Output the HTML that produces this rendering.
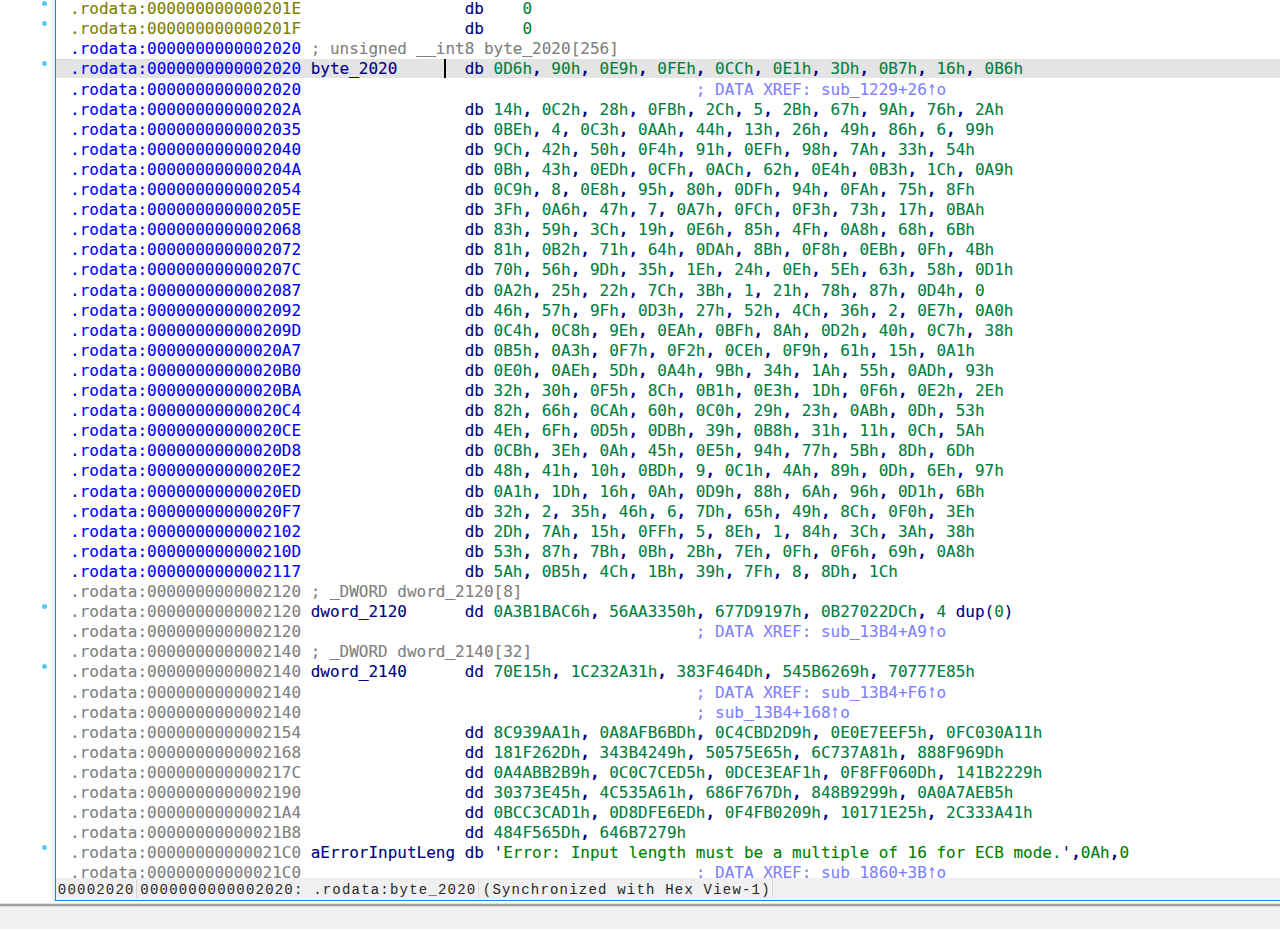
<!DOCTYPE html>
<html lang="en"><head><meta charset="utf-8"><title>IDA View</title>
<style>
html,body{margin:0;padding:0;background:#fff;}
body{width:1280px;height:930px;position:relative;overflow:hidden;}
#view{position:absolute;left:0;top:0;width:1280px;height:878px;overflow:hidden;background:#fff;}
.r{position:absolute;left:0;height:21px;line-height:21px;white-space:pre;font-family:"DejaVu Sans Mono", "Liberation Mono", monospace;font-size:15.0px;letter-spacing:0.0000px;font-kerning:none;font-variant-ligatures:none;-webkit-text-stroke:0.1px currentColor;}
.hl{position:absolute;left:56px;width:1224px;background:#e4e4e4;}
.dot{position:absolute;left:41.8px;width:5.4px;height:5.4px;border-radius:50%;background:#56c8fd;}
.o{color:#808000}.b{color:#0000ff}.g{color:#808080}.k{color:#000080}.n{color:#008040}.s{color:#008000}.x{color:#8080ff}
.c{font-weight:bold;}
.u{font-family:"Liberation Mono",monospace;letter-spacing:0.0293px;position:relative;top:1.2px;-webkit-text-stroke:0.5px currentColor;}
.a{display:inline-block;width:9.0308px;letter-spacing:0;text-align:center;transform:scale(.82,1.36);transform-origin:50% 76%;}
#txt{position:absolute;left:69.8px;top:0;width:1150px;height:900px;transform:scaleX(1.06602);transform-origin:0 0;}
#gut{position:absolute;left:51px;top:0;width:4px;height:902px;background:linear-gradient(90deg,#fff 0,#f3f3f3 40%,#e8e8e8 100%);}
#vline{position:absolute;left:55px;top:0;width:1px;height:901px;background:#2583e0;}
#hline{position:absolute;left:55px;top:900px;width:1225px;height:1px;background:#2583e0;}
#status{position:absolute;left:56px;top:878px;width:1224px;height:21px;background:#f0f0f0;font-family:"Liberation Mono","DejaVu Sans Mono",monospace;font-size:14px;letter-spacing:1.1986px;color:#262626;white-space:pre;line-height:21px;}
#status span{position:absolute;top:2.0px;}
#status i{position:absolute;top:1px;width:1px;height:19px;background:#d4d4d4;border-left:1px solid #fafafa;}
#sep{position:absolute;left:0;top:903px;width:1280px;height:4px;background:linear-gradient(#e3e3e3 0,#e3e3e3 25%,#a0a0a0 25%,#a0a0a0 75%,#dcdcdc 75%);}
#bot{position:absolute;left:0;top:907px;width:1280px;height:22px;background:#f0f0f0;}
#tick{position:absolute;left:56px;width:14px;height:1px;background:#d2d2d2;}
#cur{position:absolute;width:2.2px;background:#000;}
</style></head><body>
<div id="view">

<div class="dot" style="top:0.8px"></div>
<div class="dot" style="top:20.9px"></div>
<div class="hl" style="top:58.9px;height:19.6px"></div>
<div id="tick" style="top:58.6px"></div>
<div id="cur" style="left:444.2px;top:58.7px;height:19.7px"></div>
<div class="dot" style="top:61.1px"></div>
<div class="dot" style="top:603.8px"></div>
<div class="dot" style="top:664.1px"></div>
<div class="dot" style="top:845.0px"></div>
<div id="txt">
<div class="r" style="top:-0.9px"><span class="o">.rodata:000000000000201E</span>                 <span class="k">db</span>    <span class="n">0</span></div>
<div class="r" style="top:19.2px"><span class="o">.rodata:000000000000201F</span>                 <span class="k">db</span>    <span class="n">0</span></div>
<div class="r" style="top:39.2px"><span class="b">.rodata:0000000000002020</span> <span class="g">; unsigned <span class="u">__</span>int8 byte<span class="u">_</span>2020[256]</span></div>
<div class="r" style="top:59.4px"><span class="b">.rodata:0000000000002020</span> <span class="k">byte<span class="u">_</span>2020</span>       <span class="k">db</span> <span class="n">0D6h</span><span class="k c">, </span><span class="n">90h</span><span class="k c">, </span><span class="n">0E9h</span><span class="k c">, </span><span class="n">0FEh</span><span class="k c">, </span><span class="n">0CCh</span><span class="k c">, </span><span class="n">0E1h</span><span class="k c">, </span><span class="n">3Dh</span><span class="k c">, </span><span class="n">0B7h</span><span class="k c">, </span><span class="n">16h</span><span class="k c">, </span><span class="n">0B6h</span></div>
<div class="r" style="top:79.5px"><span class="b">.rodata:0000000000002020</span>                                         <span class="x">; DATA XREF: sub<span class="u">_</span>1229+26<span class="a">↑</span>o</span></div>
<div class="r" style="top:99.5px"><span class="b">.rodata:000000000000202A</span>                 <span class="k">db</span> <span class="n">14h</span><span class="k c">, </span><span class="n">0C2h</span><span class="k c">, </span><span class="n">28h</span><span class="k c">, </span><span class="n">0FBh</span><span class="k c">, </span><span class="n">2Ch</span><span class="k c">, </span><span class="n">5</span><span class="k c">, </span><span class="n">2Bh</span><span class="k c">, </span><span class="n">67h</span><span class="k c">, </span><span class="n">9Ah</span><span class="k c">, </span><span class="n">76h</span><span class="k c">, </span><span class="n">2Ah</span></div>
<div class="r" style="top:119.7px"><span class="b">.rodata:0000000000002035</span>                 <span class="k">db</span> <span class="n">0BEh</span><span class="k c">, </span><span class="n">4</span><span class="k c">, </span><span class="n">0C3h</span><span class="k c">, </span><span class="n">0AAh</span><span class="k c">, </span><span class="n">44h</span><span class="k c">, </span><span class="n">13h</span><span class="k c">, </span><span class="n">26h</span><span class="k c">, </span><span class="n">49h</span><span class="k c">, </span><span class="n">86h</span><span class="k c">, </span><span class="n">6</span><span class="k c">, </span><span class="n">99h</span></div>
<div class="r" style="top:139.8px"><span class="b">.rodata:0000000000002040</span>                 <span class="k">db</span> <span class="n">9Ch</span><span class="k c">, </span><span class="n">42h</span><span class="k c">, </span><span class="n">50h</span><span class="k c">, </span><span class="n">0F4h</span><span class="k c">, </span><span class="n">91h</span><span class="k c">, </span><span class="n">0EFh</span><span class="k c">, </span><span class="n">98h</span><span class="k c">, </span><span class="n">7Ah</span><span class="k c">, </span><span class="n">33h</span><span class="k c">, </span><span class="n">54h</span></div>
<div class="r" style="top:159.9px"><span class="b">.rodata:000000000000204A</span>                 <span class="k">db</span> <span class="n">0Bh</span><span class="k c">, </span><span class="n">43h</span><span class="k c">, </span><span class="n">0EDh</span><span class="k c">, </span><span class="n">0CFh</span><span class="k c">, </span><span class="n">0ACh</span><span class="k c">, </span><span class="n">62h</span><span class="k c">, </span><span class="n">0E4h</span><span class="k c">, </span><span class="n">0B3h</span><span class="k c">, </span><span class="n">1Ch</span><span class="k c">, </span><span class="n">0A9h</span></div>
<div class="r" style="top:180.0px"><span class="b">.rodata:0000000000002054</span>                 <span class="k">db</span> <span class="n">0C9h</span><span class="k c">, </span><span class="n">8</span><span class="k c">, </span><span class="n">0E8h</span><span class="k c">, </span><span class="n">95h</span><span class="k c">, </span><span class="n">80h</span><span class="k c">, </span><span class="n">0DFh</span><span class="k c">, </span><span class="n">94h</span><span class="k c">, </span><span class="n">0FAh</span><span class="k c">, </span><span class="n">75h</span><span class="k c">, </span><span class="n">8Fh</span></div>
<div class="r" style="top:200.1px"><span class="b">.rodata:000000000000205E</span>                 <span class="k">db</span> <span class="n">3Fh</span><span class="k c">, </span><span class="n">0A6h</span><span class="k c">, </span><span class="n">47h</span><span class="k c">, </span><span class="n">7</span><span class="k c">, </span><span class="n">0A7h</span><span class="k c">, </span><span class="n">0FCh</span><span class="k c">, </span><span class="n">0F3h</span><span class="k c">, </span><span class="n">73h</span><span class="k c">, </span><span class="n">17h</span><span class="k c">, </span><span class="n">0BAh</span></div>
<div class="r" style="top:220.2px"><span class="b">.rodata:0000000000002068</span>                 <span class="k">db</span> <span class="n">83h</span><span class="k c">, </span><span class="n">59h</span><span class="k c">, </span><span class="n">3Ch</span><span class="k c">, </span><span class="n">19h</span><span class="k c">, </span><span class="n">0E6h</span><span class="k c">, </span><span class="n">85h</span><span class="k c">, </span><span class="n">4Fh</span><span class="k c">, </span><span class="n">0A8h</span><span class="k c">, </span><span class="n">68h</span><span class="k c">, </span><span class="n">6Bh</span></div>
<div class="r" style="top:240.3px"><span class="b">.rodata:0000000000002072</span>                 <span class="k">db</span> <span class="n">81h</span><span class="k c">, </span><span class="n">0B2h</span><span class="k c">, </span><span class="n">71h</span><span class="k c">, </span><span class="n">64h</span><span class="k c">, </span><span class="n">0DAh</span><span class="k c">, </span><span class="n">8Bh</span><span class="k c">, </span><span class="n">0F8h</span><span class="k c">, </span><span class="n">0EBh</span><span class="k c">, </span><span class="n">0Fh</span><span class="k c">, </span><span class="n">4Bh</span></div>
<div class="r" style="top:260.4px"><span class="b">.rodata:000000000000207C</span>                 <span class="k">db</span> <span class="n">70h</span><span class="k c">, </span><span class="n">56h</span><span class="k c">, </span><span class="n">9Dh</span><span class="k c">, </span><span class="n">35h</span><span class="k c">, </span><span class="n">1Eh</span><span class="k c">, </span><span class="n">24h</span><span class="k c">, </span><span class="n">0Eh</span><span class="k c">, </span><span class="n">5Eh</span><span class="k c">, </span><span class="n">63h</span><span class="k c">, </span><span class="n">58h</span><span class="k c">, </span><span class="n">0D1h</span></div>
<div class="r" style="top:280.5px"><span class="b">.rodata:0000000000002087</span>                 <span class="k">db</span> <span class="n">0A2h</span><span class="k c">, </span><span class="n">25h</span><span class="k c">, </span><span class="n">22h</span><span class="k c">, </span><span class="n">7Ch</span><span class="k c">, </span><span class="n">3Bh</span><span class="k c">, </span><span class="n">1</span><span class="k c">, </span><span class="n">21h</span><span class="k c">, </span><span class="n">78h</span><span class="k c">, </span><span class="n">87h</span><span class="k c">, </span><span class="n">0D4h</span><span class="k c">, </span><span class="n">0</span></div>
<div class="r" style="top:300.6px"><span class="b">.rodata:0000000000002092</span>                 <span class="k">db</span> <span class="n">46h</span><span class="k c">, </span><span class="n">57h</span><span class="k c">, </span><span class="n">9Fh</span><span class="k c">, </span><span class="n">0D3h</span><span class="k c">, </span><span class="n">27h</span><span class="k c">, </span><span class="n">52h</span><span class="k c">, </span><span class="n">4Ch</span><span class="k c">, </span><span class="n">36h</span><span class="k c">, </span><span class="n">2</span><span class="k c">, </span><span class="n">0E7h</span><span class="k c">, </span><span class="n">0A0h</span></div>
<div class="r" style="top:320.7px"><span class="b">.rodata:000000000000209D</span>                 <span class="k">db</span> <span class="n">0C4h</span><span class="k c">, </span><span class="n">0C8h</span><span class="k c">, </span><span class="n">9Eh</span><span class="k c">, </span><span class="n">0EAh</span><span class="k c">, </span><span class="n">0BFh</span><span class="k c">, </span><span class="n">8Ah</span><span class="k c">, </span><span class="n">0D2h</span><span class="k c">, </span><span class="n">40h</span><span class="k c">, </span><span class="n">0C7h</span><span class="k c">, </span><span class="n">38h</span></div>
<div class="r" style="top:340.8px"><span class="b">.rodata:00000000000020A7</span>                 <span class="k">db</span> <span class="n">0B5h</span><span class="k c">, </span><span class="n">0A3h</span><span class="k c">, </span><span class="n">0F7h</span><span class="k c">, </span><span class="n">0F2h</span><span class="k c">, </span><span class="n">0CEh</span><span class="k c">, </span><span class="n">0F9h</span><span class="k c">, </span><span class="n">61h</span><span class="k c">, </span><span class="n">15h</span><span class="k c">, </span><span class="n">0A1h</span></div>
<div class="r" style="top:360.9px"><span class="b">.rodata:00000000000020B0</span>                 <span class="k">db</span> <span class="n">0E0h</span><span class="k c">, </span><span class="n">0AEh</span><span class="k c">, </span><span class="n">5Dh</span><span class="k c">, </span><span class="n">0A4h</span><span class="k c">, </span><span class="n">9Bh</span><span class="k c">, </span><span class="n">34h</span><span class="k c">, </span><span class="n">1Ah</span><span class="k c">, </span><span class="n">55h</span><span class="k c">, </span><span class="n">0ADh</span><span class="k c">, </span><span class="n">93h</span></div>
<div class="r" style="top:381.0px"><span class="b">.rodata:00000000000020BA</span>                 <span class="k">db</span> <span class="n">32h</span><span class="k c">, </span><span class="n">30h</span><span class="k c">, </span><span class="n">0F5h</span><span class="k c">, </span><span class="n">8Ch</span><span class="k c">, </span><span class="n">0B1h</span><span class="k c">, </span><span class="n">0E3h</span><span class="k c">, </span><span class="n">1Dh</span><span class="k c">, </span><span class="n">0F6h</span><span class="k c">, </span><span class="n">0E2h</span><span class="k c">, </span><span class="n">2Eh</span></div>
<div class="r" style="top:401.1px"><span class="b">.rodata:00000000000020C4</span>                 <span class="k">db</span> <span class="n">82h</span><span class="k c">, </span><span class="n">66h</span><span class="k c">, </span><span class="n">0CAh</span><span class="k c">, </span><span class="n">60h</span><span class="k c">, </span><span class="n">0C0h</span><span class="k c">, </span><span class="n">29h</span><span class="k c">, </span><span class="n">23h</span><span class="k c">, </span><span class="n">0ABh</span><span class="k c">, </span><span class="n">0Dh</span><span class="k c">, </span><span class="n">53h</span></div>
<div class="r" style="top:421.2px"><span class="b">.rodata:00000000000020CE</span>                 <span class="k">db</span> <span class="n">4Eh</span><span class="k c">, </span><span class="n">6Fh</span><span class="k c">, </span><span class="n">0D5h</span><span class="k c">, </span><span class="n">0DBh</span><span class="k c">, </span><span class="n">39h</span><span class="k c">, </span><span class="n">0B8h</span><span class="k c">, </span><span class="n">31h</span><span class="k c">, </span><span class="n">11h</span><span class="k c">, </span><span class="n">0Ch</span><span class="k c">, </span><span class="n">5Ah</span></div>
<div class="r" style="top:441.3px"><span class="b">.rodata:00000000000020D8</span>                 <span class="k">db</span> <span class="n">0CBh</span><span class="k c">, </span><span class="n">3Eh</span><span class="k c">, </span><span class="n">0Ah</span><span class="k c">, </span><span class="n">45h</span><span class="k c">, </span><span class="n">0E5h</span><span class="k c">, </span><span class="n">94h</span><span class="k c">, </span><span class="n">77h</span><span class="k c">, </span><span class="n">5Bh</span><span class="k c">, </span><span class="n">8Dh</span><span class="k c">, </span><span class="n">6Dh</span></div>
<div class="r" style="top:461.4px"><span class="b">.rodata:00000000000020E2</span>                 <span class="k">db</span> <span class="n">48h</span><span class="k c">, </span><span class="n">41h</span><span class="k c">, </span><span class="n">10h</span><span class="k c">, </span><span class="n">0BDh</span><span class="k c">, </span><span class="n">9</span><span class="k c">, </span><span class="n">0C1h</span><span class="k c">, </span><span class="n">4Ah</span><span class="k c">, </span><span class="n">89h</span><span class="k c">, </span><span class="n">0Dh</span><span class="k c">, </span><span class="n">6Eh</span><span class="k c">, </span><span class="n">97h</span></div>
<div class="r" style="top:481.5px"><span class="b">.rodata:00000000000020ED</span>                 <span class="k">db</span> <span class="n">0A1h</span><span class="k c">, </span><span class="n">1Dh</span><span class="k c">, </span><span class="n">16h</span><span class="k c">, </span><span class="n">0Ah</span><span class="k c">, </span><span class="n">0D9h</span><span class="k c">, </span><span class="n">88h</span><span class="k c">, </span><span class="n">6Ah</span><span class="k c">, </span><span class="n">96h</span><span class="k c">, </span><span class="n">0D1h</span><span class="k c">, </span><span class="n">6Bh</span></div>
<div class="r" style="top:501.6px"><span class="b">.rodata:00000000000020F7</span>                 <span class="k">db</span> <span class="n">32h</span><span class="k c">, </span><span class="n">2</span><span class="k c">, </span><span class="n">35h</span><span class="k c">, </span><span class="n">46h</span><span class="k c">, </span><span class="n">6</span><span class="k c">, </span><span class="n">7Dh</span><span class="k c">, </span><span class="n">65h</span><span class="k c">, </span><span class="n">49h</span><span class="k c">, </span><span class="n">8Ch</span><span class="k c">, </span><span class="n">0F0h</span><span class="k c">, </span><span class="n">3Eh</span></div>
<div class="r" style="top:521.6px"><span class="b">.rodata:0000000000002102</span>                 <span class="k">db</span> <span class="n">2Dh</span><span class="k c">, </span><span class="n">7Ah</span><span class="k c">, </span><span class="n">15h</span><span class="k c">, </span><span class="n">0FFh</span><span class="k c">, </span><span class="n">5</span><span class="k c">, </span><span class="n">8Eh</span><span class="k c">, </span><span class="n">1</span><span class="k c">, </span><span class="n">84h</span><span class="k c">, </span><span class="n">3Ch</span><span class="k c">, </span><span class="n">3Ah</span><span class="k c">, </span><span class="n">38h</span></div>
<div class="r" style="top:541.8px"><span class="b">.rodata:000000000000210D</span>                 <span class="k">db</span> <span class="n">53h</span><span class="k c">, </span><span class="n">87h</span><span class="k c">, </span><span class="n">7Bh</span><span class="k c">, </span><span class="n">0Bh</span><span class="k c">, </span><span class="n">2Bh</span><span class="k c">, </span><span class="n">7Eh</span><span class="k c">, </span><span class="n">0Fh</span><span class="k c">, </span><span class="n">0F6h</span><span class="k c">, </span><span class="n">69h</span><span class="k c">, </span><span class="n">0A8h</span></div>
<div class="r" style="top:561.9px"><span class="b">.rodata:0000000000002117</span>                 <span class="k">db</span> <span class="n">5Ah</span><span class="k c">, </span><span class="n">0B5h</span><span class="k c">, </span><span class="n">4Ch</span><span class="k c">, </span><span class="n">1Bh</span><span class="k c">, </span><span class="n">39h</span><span class="k c">, </span><span class="n">7Fh</span><span class="k c">, </span><span class="n">8</span><span class="k c">, </span><span class="n">8Dh</span><span class="k c">, </span><span class="n">1Ch</span></div>
<div class="r" style="top:582.0px"><span class="g">.rodata:0000000000002120</span> <span class="g">; <span class="u">_</span>DWORD dword<span class="u">_</span>2120[8]</span></div>
<div class="r" style="top:602.0px"><span class="g">.rodata:0000000000002120</span> <span class="k">dword<span class="u">_</span>2120</span>      <span class="k">dd</span> <span class="n">0A3B1BAC6h</span><span class="k c">, </span><span class="n">56AA3350h</span><span class="k c">, </span><span class="n">677D9197h</span><span class="k c">, </span><span class="n">0B27022DCh</span><span class="k c">, </span><span class="n">4 </span><span class="k">dup(</span><span class="n">0</span><span class="k">)</span></div>
<div class="r" style="top:622.1px"><span class="g">.rodata:0000000000002120</span>                                         <span class="x">; DATA XREF: sub<span class="u">_</span>13B4+A9<span class="a">↑</span>o</span></div>
<div class="r" style="top:642.2px"><span class="g">.rodata:0000000000002140</span> <span class="g">; <span class="u">_</span>DWORD dword<span class="u">_</span>2140[32]</span></div>
<div class="r" style="top:662.4px"><span class="g">.rodata:0000000000002140</span> <span class="k">dword<span class="u">_</span>2140</span>      <span class="k">dd</span> <span class="n">70E15h</span><span class="k c">, </span><span class="n">1C232A31h</span><span class="k c">, </span><span class="n">383F464Dh</span><span class="k c">, </span><span class="n">545B6269h</span><span class="k c">, </span><span class="n">70777E85h</span></div>
<div class="r" style="top:682.5px"><span class="g">.rodata:0000000000002140</span>                                         <span class="x">; DATA XREF: sub<span class="u">_</span>13B4+F6<span class="a">↑</span>o</span></div>
<div class="r" style="top:702.5px"><span class="g">.rodata:0000000000002140</span>                                         <span class="x">; sub<span class="u">_</span>13B4+168<span class="a">↑</span>o</span></div>
<div class="r" style="top:722.6px"><span class="g">.rodata:0000000000002154</span>                 <span class="k">dd</span> <span class="n">8C939AA1h</span><span class="k c">, </span><span class="n">0A8AFB6BDh</span><span class="k c">, </span><span class="n">0C4CBD2D9h</span><span class="k c">, </span><span class="n">0E0E7EEF5h</span><span class="k c">, </span><span class="n">0FC030A11h</span></div>
<div class="r" style="top:742.8px"><span class="g">.rodata:0000000000002168</span>                 <span class="k">dd</span> <span class="n">181F262Dh</span><span class="k c">, </span><span class="n">343B4249h</span><span class="k c">, </span><span class="n">50575E65h</span><span class="k c">, </span><span class="n">6C737A81h</span><span class="k c">, </span><span class="n">888F969Dh</span></div>
<div class="r" style="top:762.9px"><span class="g">.rodata:000000000000217C</span>                 <span class="k">dd</span> <span class="n">0A4ABB2B9h</span><span class="k c">, </span><span class="n">0C0C7CED5h</span><span class="k c">, </span><span class="n">0DCE3EAF1h</span><span class="k c">, </span><span class="n">0F8FF060Dh</span><span class="k c">, </span><span class="n">141B2229h</span></div>
<div class="r" style="top:783.0px"><span class="g">.rodata:0000000000002190</span>                 <span class="k">dd</span> <span class="n">30373E45h</span><span class="k c">, </span><span class="n">4C535A61h</span><span class="k c">, </span><span class="n">686F767Dh</span><span class="k c">, </span><span class="n">848B9299h</span><span class="k c">, </span><span class="n">0A0A7AEB5h</span></div>
<div class="r" style="top:803.0px"><span class="g">.rodata:00000000000021A4</span>                 <span class="k">dd</span> <span class="n">0BCC3CAD1h</span><span class="k c">, </span><span class="n">0D8DFE6EDh</span><span class="k c">, </span><span class="n">0F4FB0209h</span><span class="k c">, </span><span class="n">10171E25h</span><span class="k c">, </span><span class="n">2C333A41h</span></div>
<div class="r" style="top:823.1px"><span class="g">.rodata:00000000000021B8</span>                 <span class="k">dd</span> <span class="n">484F565Dh</span><span class="k c">, </span><span class="n">646B7279h</span></div>
<div class="r" style="top:843.2px"><span class="g">.rodata:00000000000021C0</span> <span class="k">aErrorInputLeng</span> <span class="k">db</span> <span class="k">'</span><span class="s">Error: Input length must be a multiple of 16 for ECB mode.</span><span class="k">'</span><span class="k c">,</span><span class="s">0Ah</span><span class="k c">,</span><span class="s">0</span></div>
<div class="r" style="top:863.4px"><span class="g">.rodata:00000000000021C0</span>                                         <span class="x">; DATA XREF: sub<span class="u">_</span>1860+3B<span class="a">↑</span>o</span></div>
</div>
</div>
<div id="gut"></div><div id="vline"></div><div id="hline"></div>

<div id="status"><span style="left:1.85px">00002020</span><i style="left:78.5px"></i><span style="left:84.35px">0000000000002020: .rodata:byte_2020</span><i style="left:420.7px"></i><span style="left:426.8px">(Synchronized with Hex View-1)</span><i style="left:715px"></i></div>

<div id="sep"></div><div id="bot"></div>
</body></html>
